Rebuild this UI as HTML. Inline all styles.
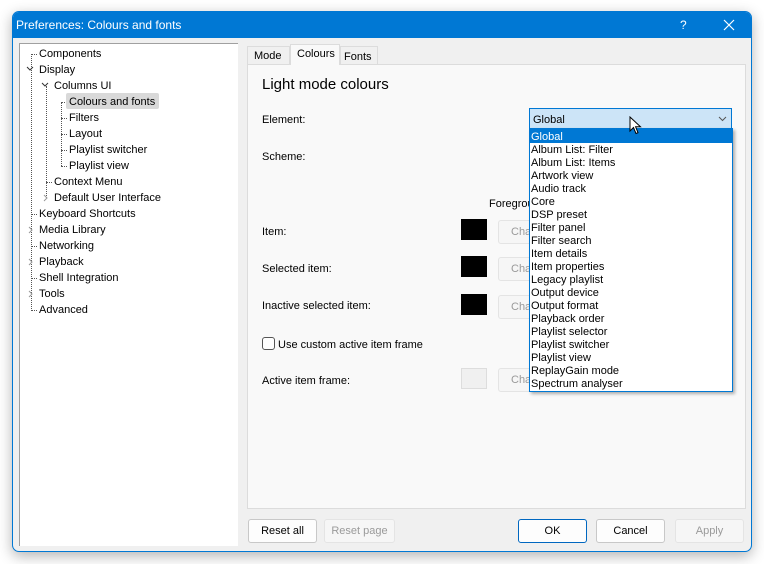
<!DOCTYPE html>
<html><head><style>
*{margin:0;padding:0;box-sizing:border-box}
body{width:764px;height:564px;background:#fff;font-family:"Liberation Sans",sans-serif;font-size:11px;color:#000;position:relative;overflow:hidden}
.a{position:absolute;white-space:nowrap}
.win{position:absolute;left:12px;top:11px;width:740px;height:541px;background:#f0f0f0;border:1px solid #0078d4;border-radius:7px;box-shadow:0 4px 14px rgba(0,0,0,.3);overflow:hidden}
.title{position:absolute;left:0;top:0;width:100%;height:26px;background:#0078d4;color:#fff;font-size:12px}
.tree{position:absolute;left:19px;top:43px;width:219px;height:503px;background:#fff;border-left:1px solid #a0a0a0;border-top:1px solid #a0a0a0}
.t{position:absolute;font-size:11px;line-height:14px}
.dv{position:absolute;border-left:1px dotted #555;width:0}
.dh{position:absolute;border-top:1px dotted #555;height:0}
.chev{position:absolute}
.btn{position:absolute;height:24px;border:1px solid #c8c8c8;border-radius:3px;background:#fdfdfd;text-align:center;line-height:22px;font-size:11px}
.dis{color:#9a9a9a;background:#f6f6f6;border-color:#e4e4e4}
.sw{position:absolute;width:26px;height:21px;background:#000}
.li{position:absolute;left:531px;font-size:11px;line-height:13px}
</style></head><body>
<div class="win"></div>
<div class="a title" style="left:13px;top:12px;width:738px;border-radius:6px 6px 0 0"><span class="a" style="left:3px;top:6px">Preferences: Colours and fonts</span><span class="a" style="left:667px;top:6px">?</span>
<svg class="a" style="left:710px;top:7px" width="12" height="12" viewBox="0 0 12 12"><path d="M1 1L11 11M11 1L1 11" stroke="#fff" stroke-width="1.2"/></svg></div>

<div class="tree"></div>
<div class="dv" style="left:31px;top:54px;height:257px"></div>
<div class="dv" style="left:46px;top:86px;height:112px"></div>
<div class="dv" style="left:61px;top:102px;height:64px"></div>
<div class="dh" style="left:31px;top:54px;width:6px"></div>
<div class="dh" style="left:46px;top:182px;width:6px"></div>
<div class="dh" style="left:31px;top:214px;width:6px"></div>
<div class="dh" style="left:31px;top:246px;width:6px"></div>
<div class="dh" style="left:31px;top:278px;width:6px"></div>
<div class="dh" style="left:31px;top:310px;width:6px"></div>
<div class="dh" style="left:61px;top:102px;width:6px"></div>
<div class="dh" style="left:61px;top:118px;width:6px"></div>
<div class="dh" style="left:61px;top:134px;width:6px"></div>
<div class="dh" style="left:61px;top:150px;width:6px"></div>
<div class="dh" style="left:61px;top:166px;width:6px"></div>
<svg class="chev" style="left:26px;top:66px" width="8" height="6"><path d="M1 1L4 4L7 1" stroke="#333" fill="none"/></svg>
<svg class="chev" style="left:41px;top:82px" width="8" height="6"><path d="M1 1L4 4L7 1" stroke="#333" fill="none"/></svg>
<svg class="chev" style="left:43px;top:194px" width="6" height="8"><path d="M1 1L4 4L1 7" stroke="#999" fill="none"/></svg>
<svg class="chev" style="left:28px;top:226px" width="6" height="8"><path d="M1 1L4 4L1 7" stroke="#999" fill="none"/></svg>
<svg class="chev" style="left:28px;top:258px" width="6" height="8"><path d="M1 1L4 4L1 7" stroke="#999" fill="none"/></svg>
<svg class="chev" style="left:28px;top:290px" width="6" height="8"><path d="M1 1L4 4L1 7" stroke="#999" fill="none"/></svg>
<div class="a" style="left:66px;top:93px;width:93px;height:16px;background:#d9d9d9;border-radius:2px"></div>
<div class="t" style="left:39px;top:47px">Components</div>
<div class="t" style="left:39px;top:63px">Display</div>
<div class="t" style="left:54px;top:79px">Columns UI</div>
<div class="t" style="left:69px;top:95px">Colours and fonts</div>
<div class="t" style="left:69px;top:111px">Filters</div>
<div class="t" style="left:69px;top:127px">Layout</div>
<div class="t" style="left:69px;top:143px">Playlist switcher</div>
<div class="t" style="left:69px;top:159px">Playlist view</div>
<div class="t" style="left:54px;top:175px">Context Menu</div>
<div class="t" style="left:54px;top:191px">Default User Interface</div>
<div class="t" style="left:39px;top:207px">Keyboard Shortcuts</div>
<div class="t" style="left:39px;top:223px">Media Library</div>
<div class="t" style="left:39px;top:239px">Networking</div>
<div class="t" style="left:39px;top:255px">Playback</div>
<div class="t" style="left:39px;top:271px">Shell Integration</div>
<div class="t" style="left:39px;top:287px">Tools</div>
<div class="t" style="left:39px;top:303px">Advanced</div>

<div class="a" style="left:247px;top:64px;width:499px;height:445px;background:#f9f9f9;border:1px solid #dcdcdc"></div>
<div class="a" style="left:247px;top:46px;width:43px;height:19px;border:1px solid #dcdcdc;background:#f0f0f0;padding:3px 0 0 6px">Mode</div>
<div class="a" style="left:290px;top:44px;width:50px;height:21px;border:1px solid #dcdcdc;border-bottom:none;background:#f9f9f9;padding:3px 0 0 6px">Colours</div>
<div class="a" style="left:340px;top:46px;width:38px;height:19px;border:1px solid #dcdcdc;background:#f0f0f0;padding:4px 0 0 3px">Fonts</div>

<div class="a" style="left:262px;top:76px;font-size:15px">Light mode colours</div>
<div class="a" style="left:262px;top:114px">Element:</div>
<div class="a" style="left:262px;top:151px">Scheme:</div>
<div class="a" style="left:489px;top:198px">Foregrou</div>
<div class="a" style="left:262px;top:226px">Item:</div>
<div class="a" style="left:262px;top:263px">Selected item:</div>
<div class="a" style="left:262px;top:300px">Inactive selected item:</div>
<div class="a" style="left:262px;top:337px;width:13px;height:13px;border:1px solid #555;border-radius:3px;background:#fff"></div>
<div class="a" style="left:278px;top:339px">Use custom active item frame</div>
<div class="a" style="left:262px;top:375px">Active item frame:</div>
<div class="sw" style="left:461px;top:219px"></div>
<div class="sw" style="left:461px;top:256px"></div>
<div class="sw" style="left:461px;top:294px"></div>
<div class="sw" style="left:461px;top:368px;background:#f0f0f0;border:1px solid #ddd"></div>
<div class="btn dis" style="left:498px;top:220px;width:40px;text-align:left;padding-left:12px">Cha</div>
<div class="btn dis" style="left:498px;top:257px;width:40px;text-align:left;padding-left:12px">Cha</div>
<div class="btn dis" style="left:498px;top:295px;width:40px;text-align:left;padding-left:12px">Cha</div>
<div class="btn dis" style="left:498px;top:368px;width:40px;text-align:left;padding-left:12px">Cha</div>

<div class="a" style="left:529px;top:108px;width:203px;height:21px;background:#cce4f7;border:1px solid #0078d4;padding:5px 0 0 3px">Global<svg class="a" style="left:188px;top:7px" width="9" height="6"><path d="M1 1L4.5 4.5L8 1" stroke="#555" fill="none"/></svg></div>
<div class="a" style="left:529px;top:128px;width:204px;height:264px;background:#fff;border:1px solid #0078d4;box-shadow:2px 2px 3px rgba(0,0,0,.3)"></div>
<div class="a" style="left:530px;top:129px;width:202px;height:14px;background:#0078d4"></div>
<div class="li" style="top:131px;color:#fff">Global</div>
<div class="li" style="top:144px">Album List: Filter</div>
<div class="li" style="top:157px">Album List: Items</div>
<div class="li" style="top:170px">Artwork view</div>
<div class="li" style="top:183px">Audio track</div>
<div class="li" style="top:196px">Core</div>
<div class="li" style="top:209px">DSP preset</div>
<div class="li" style="top:222px">Filter panel</div>
<div class="li" style="top:235px">Filter search</div>
<div class="li" style="top:248px">Item details</div>
<div class="li" style="top:261px">Item properties</div>
<div class="li" style="top:274px">Legacy playlist</div>
<div class="li" style="top:287px">Output device</div>
<div class="li" style="top:300px">Output format</div>
<div class="li" style="top:313px">Playback order</div>
<div class="li" style="top:326px">Playlist selector</div>
<div class="li" style="top:339px">Playlist switcher</div>
<div class="li" style="top:352px">Playlist view</div>
<div class="li" style="top:365px">ReplayGain mode</div>
<div class="li" style="top:378px">Spectrum analyser</div>
<svg class="a" style="left:629px;top:116px" width="14" height="20" viewBox="0 0 14 20"><path d="M1 1 L1 15 L4.5 11.5 L7 17.5 L9 16.7 L6.6 10.8 L11.5 10.8 Z" fill="#fff" stroke="#000" stroke-width="1"/></svg>

<div class="btn" style="left:248px;top:519px;width:69px">Reset all</div>
<div class="btn dis" style="left:324px;top:519px;width:71px">Reset page</div>
<div class="btn" style="left:518px;top:519px;width:69px;border-color:#0067c0">OK</div>
<div class="btn" style="left:596px;top:519px;width:69px">Cancel</div>
<div class="btn dis" style="left:675px;top:519px;width:69px">Apply</div>
</body></html>
